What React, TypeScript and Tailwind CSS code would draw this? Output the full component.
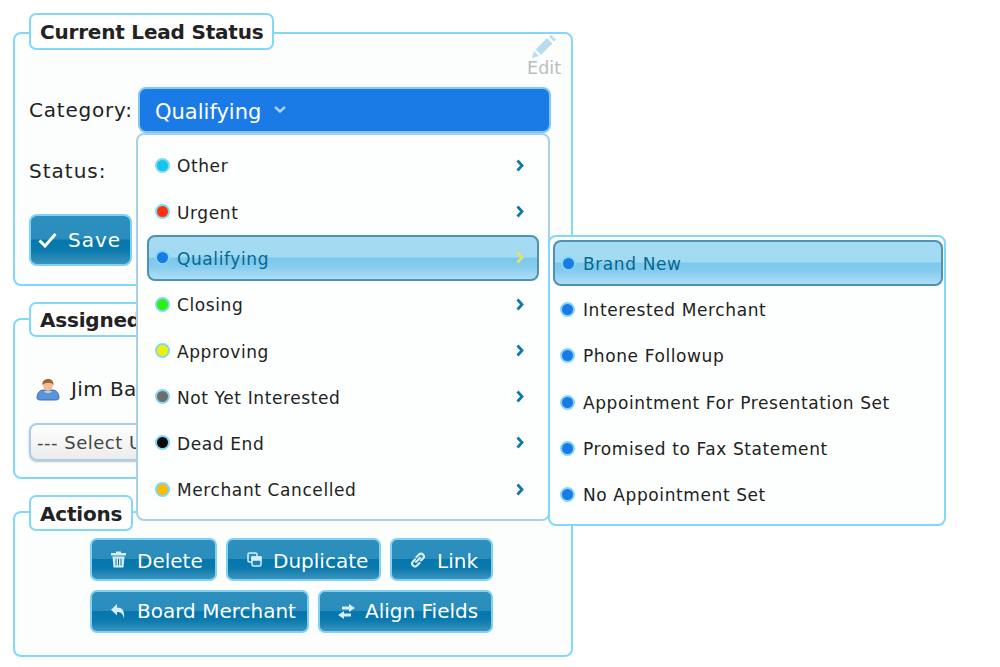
import React from "react";

const categories = [
  { label: "Other", color: "bg-[#14c3ee]" },
  { label: "Urgent", color: "bg-[#fb3010]" },
  { label: "Qualifying", color: "bg-[#1a7ae6]", active: true },
  { label: "Closing", color: "bg-[#2cf010]" },
  { label: "Approving", color: "bg-[#eef00c]" },
  { label: "Not Yet Interested", color: "bg-[#6e6e6e]" },
  { label: "Dead End", color: "bg-[#0a0a0a]" },
  { label: "Merchant Cancelled", color: "bg-[#f4be0a]" },
];

const statuses = [
  "Brand New",
  "Interested Merchant",
  "Phone Followup",
  "Appointment For Presentation Set",
  "Promised to Fax Statement",
  "No Appointment Set",
];

const glossy = "bg-[linear-gradient(#2d8fbe_0%,#2a8dbc_48%,#0577ad_50%,#0a79ae_72%,#3d93bc_100%)]";
const activeRow = "bg-[linear-gradient(#a4dbf3_0%,#a2daf2_48%,#7bc8ec_50%,#86ccee_70%,#aedef4_100%)] border-2 border-[#4d92b3] text-[#05688f] rounded-[8px]";

const Legend = ({ children, pos }: { children: React.ReactNode; pos: string }) => (
  <div className={`absolute left-[14px] ${pos} px-[9px] flex items-center bg-white border-2 border-[#82d8f8] rounded-[7px] font-bold text-[20px] tracking-[-0.2px] text-[#222]`}>
    <span className="mt-[1px]">{children}</span>
  </div>
);

const ActionButton = ({ icon, label, w, lift }: { icon: React.ReactNode; label: string; w: string; lift: string }) => (
  <button className={`${w} h-[43px] flex items-center pl-[16px] gap-[9px] border-2 border-[#7ed2f3] rounded-[7px] text-white text-[20px] ${glossy}`}>
    <span className="w-[20px] flex justify-center">{icon}</span>
    <span className={lift}>{label}</span>
  </button>
);

const Dot = ({ color }: { color: string }) => (
  <span className={`w-[15px] h-[15px] shrink-0 rounded-full border-2 border-[#84d6f5] ${color}`} />
);

const Chevron = ({ color }: { color: string }) => (
  <svg width="8" height="13" viewBox="0 0 8 13" className={color}>
    <path d="M1.5 1.5 L6 6.5 L1.5 11.5" fill="none" stroke="currentColor" strokeWidth="2.8" />
  </svg>
);

const UserIcon = () => (
  <svg width="24" height="24" viewBox="0 0 24 24">
    <path d="M1 21c0-5 3-8 6-8h10c3 0 6 3 6 8 0 2-3 2-5 2H6c-2 0-5 0-5-2z" fill="#5b93d8" stroke="#3c6fb0" strokeWidth="1" />
    <path d="M8 14c1 3 7 3 8 0z" fill="#a9ccef" />
    <ellipse cx="12" cy="8" rx="5" ry="6" fill="#f2bd93" />
    <path d="M6.5 8C5 1 18 -1 17.5 8c-2-3-8-3-11 0z" fill="#a3622f" />
  </svg>
);

const PencilIcon = () => (
  <svg width="24" height="23" viewBox="0 0 24 23" fill="#b9dcef">
    <path d="M0 23 L2 16 L7 21 Z" />
    <path d="M3.5 14.5 L15 3 L20.5 8.5 L9 20 Z" />
    <path d="M17 1.5 L19 0 L24 4.5 L22 6.5 Z" />
  </svg>
);

const TrashIcon = () => (
  <svg width="15" height="17" viewBox="0 0 15 17" fill="#d5eef8">
    <path d="M5 2V0.5h5V2h5v2.5H0V2z" />
    <path d="M1.5 5.5h12l-1 11h-10zM4.5 7.5v7h1v-7zM7 7.5v7h1v-7zM9.5 7.5v7h1v-7z" fillRule="evenodd" />
  </svg>
);

const DuplicateIcon = () => (
  <svg width="15" height="15" viewBox="0 0 15 15" fill="none" stroke="#d5eef8" strokeWidth="1.5">
    <rect x="1" y="1" width="9" height="9" rx="1.5" />
    <rect x="5" y="5" width="9" height="9" rx="1.5" fill="#1a82b4" />
    <rect x="5" y="5" width="9" height="3" fill="#d5eef8" />
  </svg>
);

const LinkIcon = () => (
  <svg width="16" height="16" viewBox="0 0 16 16" fill="none" stroke="#d5eef8" strokeWidth="2.2" strokeLinecap="round">
    <path d="M6.5 5 L9 2.5a2.5 2.5 0 0 1 4 4L11 8.5" />
    <path d="M9.5 11 L7 13.5a2.5 2.5 0 0 1-4-4L5 7.5" />
    <path d="M6 10 L10 6" />
  </svg>
);

const ReplyIcon = () => (
  <svg width="14" height="15" viewBox="0 0 14 15" fill="#d5eef8">
    <path d="M6 0 L6 3.5 C11 3.5 14 6.5 13 14.5 C12 10 10 8 6 8 L6 11.5 L0 5.8 Z" />
  </svg>
);

const SwapIcon = () => (
  <svg width="17" height="15" viewBox="0 0 17 15" fill="#d5eef8">
    <path d="M11 0 L17 4 L11 8 V5.5 H4 V2.5 H11 Z" />
    <path d="M6 7 L0 11 L6 15 V12.5 H13 V9.5 H6 Z" />
  </svg>
);

export default function App() {
  return (
    <div className="relative w-[1000px] h-[667px] bg-white pl-[13px] pt-[32px] text-[#222] font-['DejaVu_Sans',sans-serif] overflow-hidden">
      <div className="w-[560px] flex flex-col gap-[32px]">
        <section className="relative h-[254px] border-2 border-[#82d8f8] rounded-[8px] bg-[#fcfefe] pl-[14px] pt-[53px]">
          <Legend pos="-top-[21px] h-[37px]">Current Lead Status</Legend>
          <div className="absolute right-[10px] top-[1px] flex flex-col items-center text-[#bdbdbd] text-[17.5px] leading-[21px]">
            <PencilIcon />
            Edit
          </div>
          <div className="flex items-center h-[46px]">
            <span className="w-[109px] text-[20px] tracking-[0.8px]">Category:</span>
            <div className="w-[413px] h-[46px] flex items-center pl-[15px] gap-[13px] rounded-[8px] border-2 border-[#84c8f0] bg-[#1a7ae6] text-white text-[21px]">
              <span className="mt-[6px]">Qualifying</span>
              <svg width="12" height="7" viewBox="0 0 12 7" className="text-[#a9d4f5] -mt-[1px]">
                <path d="M1 1 L6 5.5 L11 1" fill="none" stroke="currentColor" strokeWidth="2.4" />
              </svg>
            </div>
          </div>
          <div className="mt-[23px] h-[30px] flex items-center text-[20px] tracking-[1px]">Status:</div>
          <button className={`mt-[28px] w-[103px] h-[52px] flex items-center pl-[7px] gap-[11px] border-2 border-[#7ed2f3] rounded-[8px] text-white text-[20px] tracking-[1px] ${glossy}`}>
            <svg width="19" height="16" viewBox="0 0 19 16">
              <path d="M1.5 8.5 L7 14 L17.5 2" fill="none" stroke="white" strokeWidth="3" />
            </svg>
            Save
          </button>
        </section>

        <section className="relative h-[161px] border-2 border-[#82d8f8] rounded-[8px] bg-[#fcfefe] pl-[14px] pt-[51px]">
          <Legend pos="-top-[18px] h-[35px]">Assigned To</Legend>
          <div className="flex items-center h-[36px] pl-[7px] gap-[11px] text-[20px] tracking-[0.4px]">
            <UserIcon />
            Jim Baker
          </div>
          <div className="mt-[16px] w-[300px] h-[38px] pl-[6px] flex items-center rounded-[8px] border-2 border-[#a9cde8] bg-[linear-gradient(#ffffff,#ececec)] text-[18px] tracking-[0.5px] text-[#444] shadow-[0_1px_2px_#bbb]">
            --- Select User
          </div>
        </section>

        <section className="relative h-[146px] border-2 border-[#82d8f8] rounded-[8px] bg-[#fcfefe] pl-[75px] pt-[25px]">
          <Legend pos="-top-[18px] h-[36px]">Actions</Legend>
          <div className="flex gap-[9px]">
            <ActionButton icon={<TrashIcon />} label="Delete" w="w-[127px]" lift="mt-[2px]" />
            <ActionButton icon={<DuplicateIcon />} label="Duplicate" w="w-[155px]" lift="mt-[2px]" />
            <ActionButton icon={<LinkIcon />} label="Link" w="w-[103px]" lift="mt-[2px]" />
          </div>
          <div className="flex gap-[9px] mt-[9px]">
            <ActionButton icon={<ReplyIcon />} label="Board Merchant" w="w-[219px]" lift="-mt-[2px]" />
            <ActionButton icon={<SwapIcon />} label="Align Fields" w="w-[175px]" lift="-mt-[2px]" />
          </div>
        </section>
      </div>

      <div className="absolute left-[136px] top-[133px] w-[414px] h-[388px] border-2 border-[#a9d0e8] rounded-[8px] bg-[#fdfefe] pt-[7px] px-[9px] text-[17px] tracking-[0.6px]">
        {categories.map((c) => (
          <div key={c.label} className={`h-[46.3px] flex items-center gap-[7px] ${c.active ? `pl-[6px] pr-[13px] ${activeRow}` : "pl-[8px] pr-[15px]"}`}>
            <Dot color={c.color} />
            <span className="flex-1 mt-[4px]">{c.label}</span>
            <Chevron color={c.active ? "text-[#e8e070]" : "text-[#1079a8]"} />
          </div>
        ))}
      </div>

      <div className="absolute left-[548px] top-[235px] w-[398px] h-[291px] border-2 border-[#82d8f8] rounded-[8px] bg-[#fdfefe] pt-[3px] pl-[3px] pr-[1px] text-[17px] tracking-[0.6px]">
        {statuses.map((s, i) => (
          <div key={s} className={`h-[46.3px] flex items-center ${i === 0 ? `pl-[6px] gap-[7px] ${activeRow}` : "pl-[7px] gap-[8px]"}`}>
            <Dot color="bg-[#1a7ae6]" />
            <span className="mt-[3px]">{s}</span>
          </div>
        ))}
      </div>
    </div>
  );
}
